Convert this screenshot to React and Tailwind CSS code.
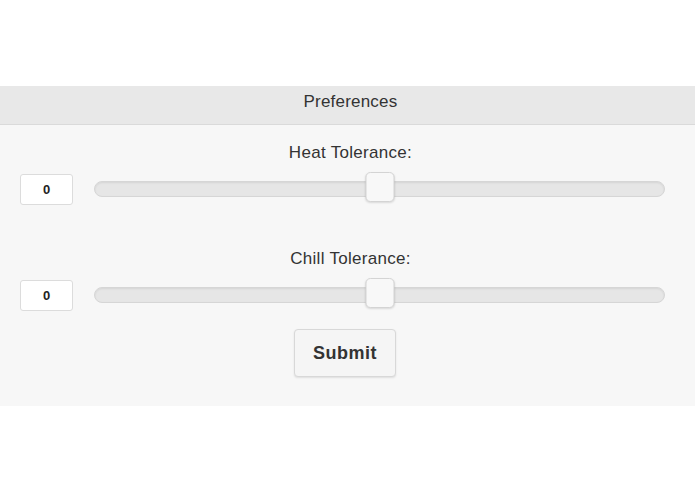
import React from "react";

const sliders = [
  { label: "Heat Tolerance:", value: 0 },
  { label: "Chill Tolerance:", value: 0 },
];

const SliderRow = ({ label, value }) => {
  return (
    <div className="flex flex-col">
      <div className="pl-[6px] text-center text-[17px] leading-[20px] tracking-[0.3px] text-[#333]">{label}</div>
      <div className="mt-[11px] flex items-center pl-[20px] pr-[30px]">
        <div className="w-[53px] h-[31px] bg-white border border-[#dcdcdc] rounded-[3px] flex items-center justify-center text-[13px] font-bold text-[#222]">
          {value}
        </div>
        <div className="ml-[21px] flex-1 relative h-[31px] flex items-center">
          <div className="w-full h-[16px] -mt-[2px] rounded-full bg-[#e6e6e6] border border-[#d6d6d6] shadow-[inset_0_1px_2px_rgba(0,0,0,0.08)]" />
          <div className="absolute left-1/2 -translate-x-1/2 top-[-2px] w-[29px] h-[30px] rounded-[5px] bg-[#f8f8f8] border border-[#d4d4d4] shadow-[0_1px_2px_rgba(0,0,0,0.12)]" />
        </div>
      </div>
    </div>
  );
};

const App = () => {
  return (
    <div className="w-[695px] h-[494px] bg-white font-['Liberation_Sans',Arial,sans-serif]">
      <div className="h-[86px]" />
      <div className="h-[39px] pb-[6px] pl-[6px] bg-[#e8e8e8] border-b border-[#dadada] flex items-center justify-center text-[17px] tracking-[0.2px] text-[#333]">
        Preferences
      </div>
      <div className="bg-[#f7f7f7] pt-[18px] pb-[29px] flex flex-col">
        <SliderRow {...sliders[0]} />
        <div className="h-[44px]" />
        <SliderRow {...sliders[1]} />
        <div className="flex justify-center mt-[18px]">
          <button className="ml-[-5px] w-[102px] h-[48px] bg-[#f5f5f5] border border-[#d8d8d8] rounded-[4px] shadow-[0_1px_2px_rgba(0,0,0,0.1)] text-[18px] font-bold tracking-[0.5px] text-[#333]">
            Submit
          </button>
        </div>
      </div>
    </div>
  );
};

export default App;
